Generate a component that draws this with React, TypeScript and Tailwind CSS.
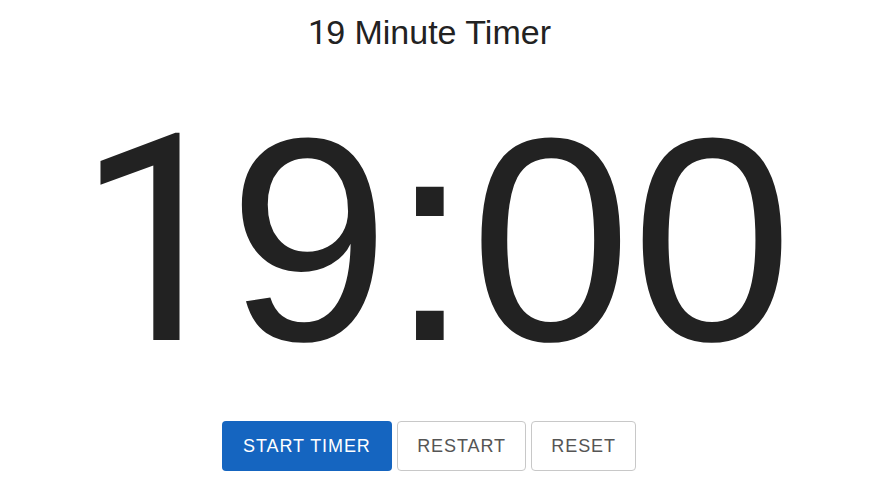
import React from 'react'

const App = () => {
  return (
    <div className="w-[890px] h-[487px] bg-white font-['Liberation_Sans',Arial,sans-serif] text-[#222222]">
      <div className="w-[858px] flex flex-col items-center pt-[15px]">
        <h1 className="text-[34px] leading-none">
          <span className="font-['Roboto',sans-serif] ml-[1px] mr-[-1px]">1</span>9 Minute Timer
        </h1>
        <div className="mt-[45px] text-[290px] leading-none">
          <span className="font-['Roboto',sans-serif] ml-[11px] mr-[-11px]">1</span>9:00
        </div>
        <div className="mt-[35px] flex gap-[5px]">
          <button type="button" className="h-[50px] px-[21px] rounded-[4px] bg-[#1565c0] text-white text-[18px] tracking-[0.9px] uppercase">
            Start Timer
          </button>
          <button type="button" className="h-[50px] px-[19.5px] rounded-[4px] border border-[#c8c8c8] bg-white text-[#555555] text-[18px] tracking-[0.9px] uppercase">
            Restart
          </button>
          <button type="button" className="h-[50px] px-[19px] rounded-[4px] border border-[#c8c8c8] bg-white text-[#555555] text-[18px] tracking-[0.9px] uppercase">
            Reset
          </button>
        </div>
      </div>
    </div>
  )
}

export default App
